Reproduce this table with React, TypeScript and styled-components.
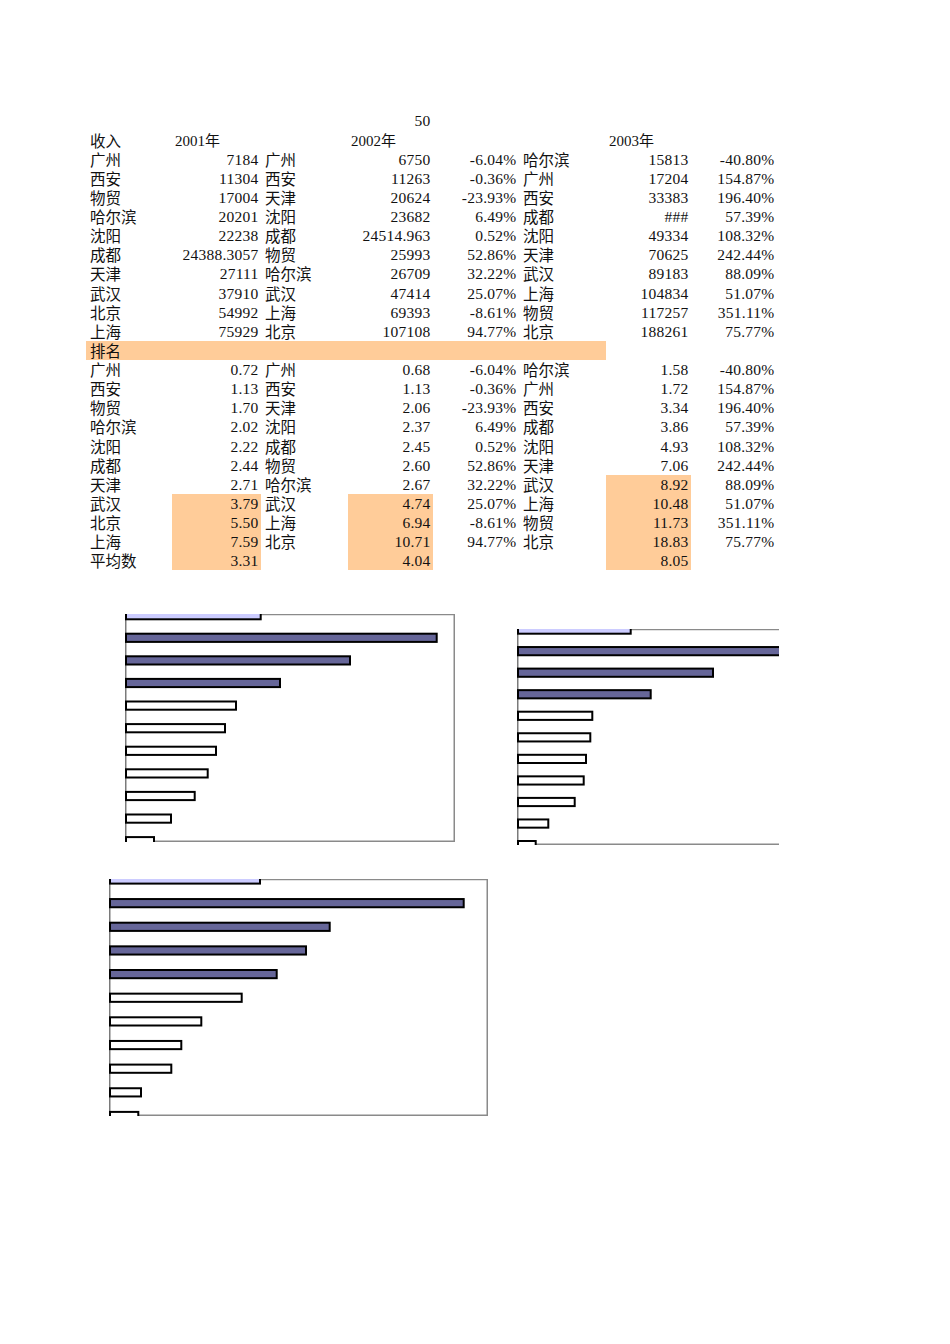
import React from "react";
import styled, { createGlobalStyle } from "styled-components";

const GlobalStyle = createGlobalStyle`
  html, body { margin: 0; padding: 0; background: #ffffff; }
  body { font-family: "Liberation Serif", "Noto Sans CJK SC", serif; color: #000; }
`;

const ROW_H = 19.13;

const Page = styled.div`
  width: 950px;
  min-height: 1344px;
  display: flex;
  flex-direction: column;
`;

const Sheet = styled.div`
  display: grid;
  grid-template-columns: 86px 89px 87px 85px 86px 87px 85px 86px;
  grid-auto-rows: ${ROW_H}px;
  margin-left: 86px;
  padding-top: 111.4px;
  width: max-content;
`;

type Kind = "label" | "num" | "head";

const Cell = styled.div<{ $kind: Kind; $hl?: boolean; $span?: number }>`
  grid-column: span ${(p) => p.$span ?? 1};
  background: ${(p) => (p.$hl ? "#ffcc99" : "transparent")};
  text-align: ${(p) => (p.$kind === "num" ? "right" : "left")};
  padding: ${(p) =>
    p.$kind === "num" ? "1px 2.5px 0 0" : p.$kind === "head" ? "1px 0 0 3px" : "0 0 0 4px"};
  box-sizing: border-box;
  font-family: ${(p) =>
    p.$kind === "label"
      ? `"Noto Sans CJK SC", "Liberation Serif", sans-serif`
      : `"Liberation Serif", "Noto Sans CJK SC", serif`};
  font-size: ${(p) => (p.$kind === "label" ? 15.5 : p.$kind === "num" ? 15.5 : 15)}px;
  letter-spacing: ${(p) => (p.$kind === "num" ? "0.25px" : "0")};
  line-height: ${(p) => (p.$kind === "label" ? `${ROW_H}px` : `${ROW_H - 1}px`)};
  white-space: nowrap;
  color: #111;
`;

const ChartRow = styled.div`
  display: flex;
  align-items: flex-start;
  margin-top: 43.5px;
`;

const ChartBox = styled.div<{ $ml: number; $mt?: number }>`
  margin-left: ${(p) => p.$ml}px;
  margin-top: ${(p) => p.$mt ?? 0}px;
  line-height: 0;
`;

const kinds: Kind[] = ["label", "num", "label", "num", "num", "label", "num", "num"];

type RowDef = (string | null)[];

const incomeRows: RowDef[] = [
  ["广州", "7184", "广州", "6750", "-6.04%", "哈尔滨", "15813", "-40.80%"],
  ["西安", "11304", "西安", "11263", "-0.36%", "广州", "17204", "154.87%"],
  ["物贸", "17004", "天津", "20624", "-23.93%", "西安", "33383", "196.40%"],
  ["哈尔滨", "20201", "沈阳", "23682", "6.49%", "成都", "###", "57.39%"],
  ["沈阳", "22238", "成都", "24514.963", "0.52%", "沈阳", "49334", "108.32%"],
  ["成都", "24388.3057", "物贸", "25993", "52.86%", "天津", "70625", "242.44%"],
  ["天津", "27111", "哈尔滨", "26709", "32.22%", "武汉", "89183", "88.09%"],
  ["武汉", "37910", "武汉", "47414", "25.07%", "上海", "104834", "51.07%"],
  ["北京", "54992", "上海", "69393", "-8.61%", "物贸", "117257", "351.11%"],
  ["上海", "75929", "北京", "107108", "94.77%", "北京", "188261", "75.77%"],
];

const rankRows: RowDef[] = [
  ["广州", "0.72", "广州", "0.68", "-6.04%", "哈尔滨", "1.58", "-40.80%"],
  ["西安", "1.13", "西安", "1.13", "-0.36%", "广州", "1.72", "154.87%"],
  ["物贸", "1.70", "天津", "2.06", "-23.93%", "西安", "3.34", "196.40%"],
  ["哈尔滨", "2.02", "沈阳", "2.37", "6.49%", "成都", "3.86", "57.39%"],
  ["沈阳", "2.22", "成都", "2.45", "0.52%", "沈阳", "4.93", "108.32%"],
  ["成都", "2.44", "物贸", "2.60", "52.86%", "天津", "7.06", "242.44%"],
  ["天津", "2.71", "哈尔滨", "2.67", "32.22%", "武汉", "8.92", "88.09%"],
  ["武汉", "3.79", "武汉", "4.74", "25.07%", "上海", "10.48", "51.07%"],
  ["北京", "5.50", "上海", "6.94", "-8.61%", "物贸", "11.73", "351.11%"],
  ["上海", "7.59", "北京", "10.71", "94.77%", "北京", "18.83", "75.77%"],
  ["平均数", "3.31", null, "4.04", null, null, "8.05", null],
];

// highlight: rank row index -> columns
const isHighlighted = (rankIdx: number, col: number) => {
  if ((col === 1 || col === 3) && rankIdx >= 7) return true;
  if (col === 6 && rankIdx >= 6) return true;
  return false;
};

type Bar = { len: number; fill: string };

const LIGHT = "#ccccff";
const DARK = "#666699";
const WHITE = "#ffffff";

const makeBars = (lens: number[], darkCount: number): Bar[] =>
  lens.map((len, i) => ({
    len,
    fill: i === 0 ? LIGHT : i <= darkCount ? DARK : WHITE,
  }));

type ChartProps = {
  width: number;
  height: number;
  start: number;
  step: number;
  bars: Bar[];
  rightBorder?: boolean;
};

const BarChart: React.FC<ChartProps> = ({ width, height, start, step, bars, rightBorder = true }) => (
  <svg width={width} height={height} viewBox={`0 0 ${width} ${height}`} style={{ overflow: "hidden" }}>
    <line x1={0} y1={0.5} x2={width} y2={0.5} stroke="#8a8a8a" strokeWidth={1.5} />
    <line x1={0} y1={height - 0.75} x2={width} y2={height - 0.75} stroke="#8a8a8a" strokeWidth={1.5} />
    {rightBorder && (
      <line x1={width - 0.75} y1={0} x2={width - 0.75} y2={height} stroke="#8a8a8a" strokeWidth={1.5} />
    )}
    <line x1={0.75} y1={0} x2={0.75} y2={height} stroke="#7a7a7a" strokeWidth={1.5} />
    {bars.map((b, i) => (
      <rect
        key={i}
        x={1}
        y={start + i * step + 1}
        width={Math.max(b.len - 2, 1)}
        height={8.2}
        fill={b.fill}
        stroke="#000"
        strokeWidth={2}
      />
    ))}
  </svg>
);

const chart1 = makeBars([136.7, 312.7, 226, 156, 112, 101, 92, 83.7, 70.7, 47, 30], 3);
const chart2 = makeBars([114.7, 320, 197, 134.7, 76.3, 74.3, 70, 67.7, 58.7, 32.3, 19.7], 3);
const chart3 = makeBars([152, 355.7, 221.7, 198, 168.7, 133.7, 93.3, 73.3, 63.3, 33, 30.3], 4);

export default function App() {
  return (
    <Page>
      <GlobalStyle />
      <Sheet>
        {/* row 0 */}
        <Cell $kind="label" />
        <Cell $kind="num" />
        <Cell $kind="label" />
        <Cell $kind="num">50</Cell>
        <Cell $kind="num" $span={4} />
        {/* header */}
        <Cell $kind="label">收入</Cell>
        <Cell $kind="head">2001年</Cell>
        <Cell $kind="label" />
        <Cell $kind="head">2002年</Cell>
        <Cell $kind="num" />
        <Cell $kind="label" />
        <Cell $kind="head">2003年</Cell>
        <Cell $kind="num" />
        {incomeRows.map((row, r) =>
          row.map((v, c) => (
            <Cell key={`i${r}-${c}`} $kind={kinds[c]}>
              {v}
            </Cell>
          ))
        )}
        <Cell $kind="label" $span={6} $hl>
          排名
        </Cell>
        <Cell $kind="num" $span={2} />
        {rankRows.map((row, r) =>
          row.map((v, c) => (
            <Cell key={`r${r}-${c}`} $kind={kinds[c]} $hl={isHighlighted(r, c)}>
              {v}
            </Cell>
          ))
        )}
      </Sheet>
      <ChartRow>
        <ChartBox $ml={125}>
          <BarChart width={330} height={228} start={-3.9} step={22.6} bars={chart1} />
        </ChartBox>
        <ChartBox $ml={62} $mt={15}>
          <BarChart width={262} height={216} start={-4.5} step={21.55} bars={chart2} rightBorder={false} />
        </ChartBox>
      </ChartRow>
      <ChartBox $ml={109} $mt={34}>
        <BarChart width={379} height={237} start={-4.6} step={23.65} bars={chart3} />
      </ChartBox>
    </Page>
  );
}
